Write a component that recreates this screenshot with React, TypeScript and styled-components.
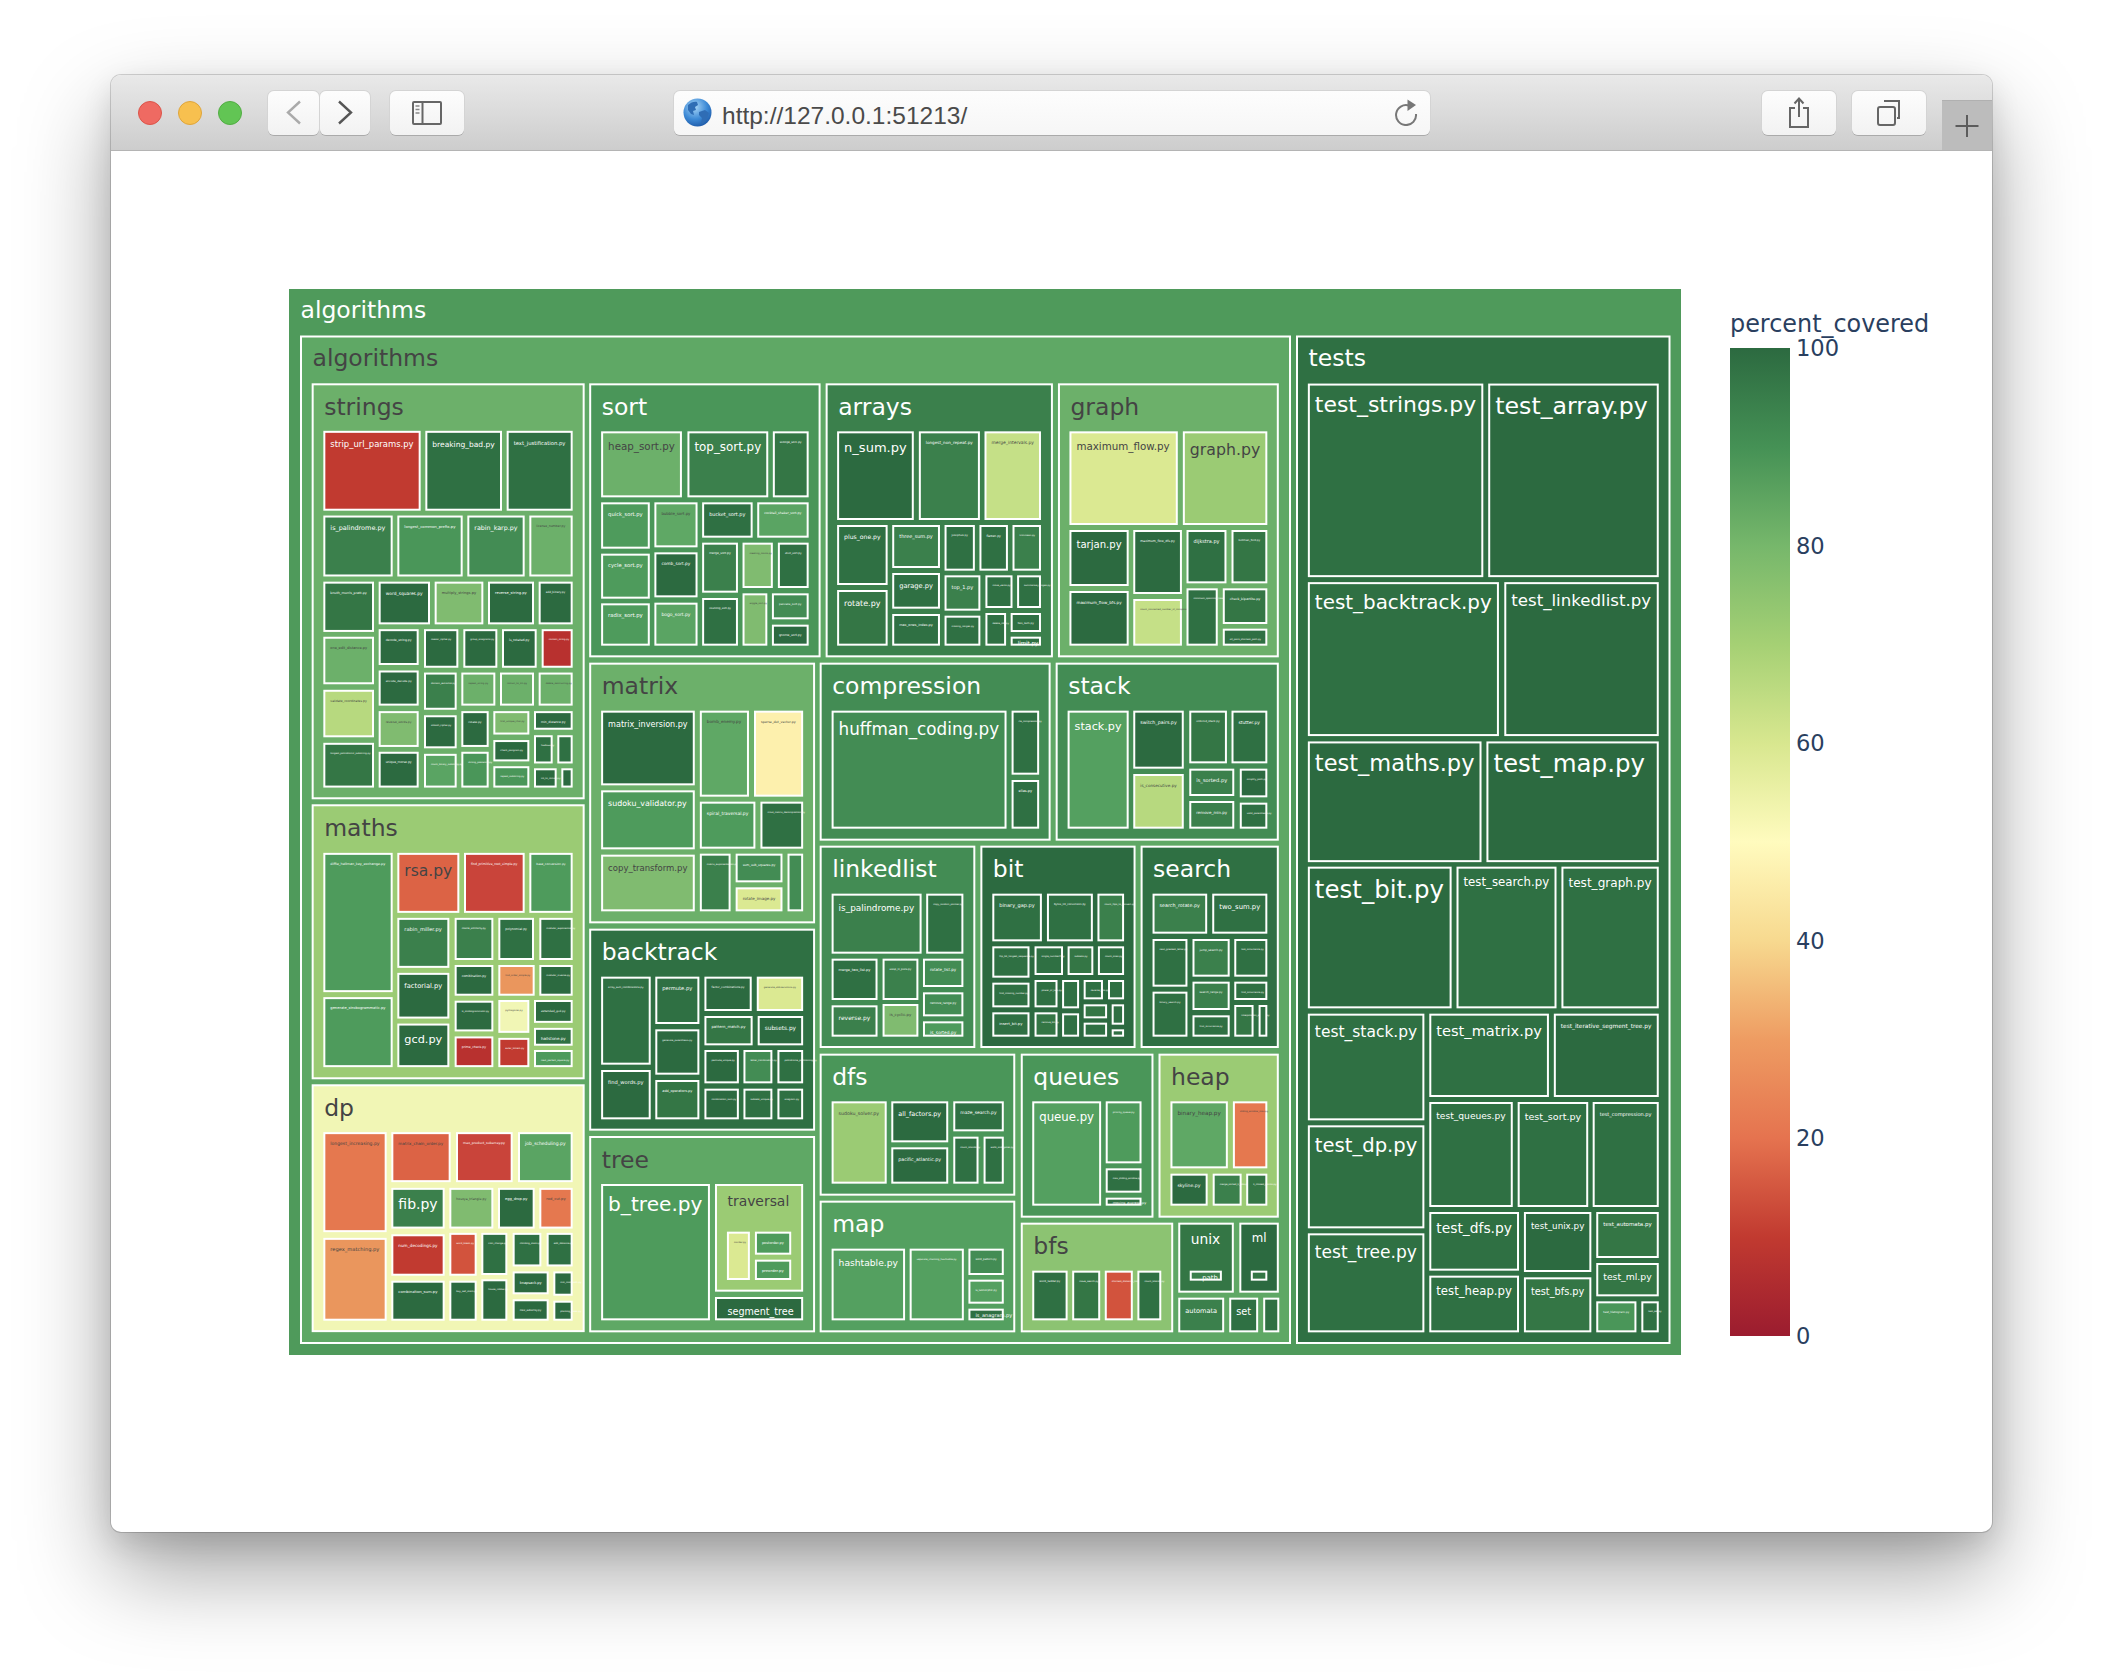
import React from "react";
import styled, { createGlobalStyle } from "styled-components";

const SHADES: Record<string, string> = {
  g0: "#2c6a40",
  g1: "#2f7043",
  g2: "#347645",
  g3: "#3b804c",
  g4: "#438c54",
  g45: "#4a9659",
  g5: "#4e9b5c",
  g55: "#54a060",
  g6: "#5aa463",
  d6: "#5fa865",
  g7: "#6cb06a",
  g8: "#80bb70",
  l1b: "#8cc372",
  l1: "#9bcb74",
  l2: "#b7d97f",
  l3: "#c5e087",
  l4: "#dbe992",
  l5: "#f1f6b5",
  y0: "#fdf0ad",
  o1: "#ea965d",
  o2: "#e5784f",
  o3: "#dc6345",
  r1: "#d2533d",
  r2: "#c9443a",
  r3: "#c13a30",
  r4: "#b8312f",
};
const DARK_INK = ["d6", "g7", "g8", "l1b", "l1", "l2", "l3", "l4", "l5", "y0", "o1", "o2", "o3"];

// x0, y0, x1, y1, shade, label, a fixed label size, the label's baseline below y0
type Tile = [number, number, number, number, string, string?, number?, number?];

const HEAD = 23.5;

// each block is measured in its own grid, place() brings it to page pixels
const place = (ox: number, oy: number, sx: number, sy: number, tiles: Tile[]): Tile[] =>
  tiles.map(([x0, y0, x1, y1, shade, label, head, drop]) => [
    ox + x0 / sx,
    oy + y0 / sy,
    ox + x1 / sx,
    oy + y1 / sy,
    shade,
    label,
    head,
    drop,
  ]);

const ROOTS: Tile[] = [
  [300, 335.5, 1291, 1344, "d6", "algorithms", HEAD, 30.6],
  [1296, 335.5, 1670.5, 1344, "g1", "tests", HEAD, 30.6],
];

const STRINGS = place(280, 280, 3, 2.904, [
  [95, 300, 914, 1508, "g7", "strings", HEAD],
  [130, 438, 422, 670, "r3", "strip_url_params.py"],
  [436, 438, 666, 670, "g1", "breaking_bad.py"],
  [680, 438, 878, 670, "g1", "text_justification.py"],
  [130, 684, 338, 861, "g3", "is_palindrome.py"],
  [352, 684, 548, 861, "g45", "longest_common_prefix.py"],
  [562, 684, 734, 861, "g4", "rabin_karp.py"],
  [748, 684, 878, 861, "g7", "license_number.py"],
  [130, 876, 282, 1022, "g2", "knuth_morris_pratt.py"],
  [296, 876, 450, 1000, "g0", "word_squares.py"],
  [464, 876, 610, 1000, "g8", "multiply_strings.py"],
  [624, 876, 762, 1000, "g0", "reverse_string.py"],
  [776, 876, 878, 1000, "g0", "add_binary.py"],
  [130, 1036, 282, 1174, "g7", "one_edit_distance.py"],
  [130, 1190, 282, 1328, "l2", "validate_coordinates.py"],
  [130, 1344, 282, 1474, "g2", "longest_palindromic_substring.py"],
  [296, 1014, 416, 1118, "g0", "decode_string.py"],
  [432, 1014, 535, 1126, "g0", "caesar_cipher.py"],
  [550, 1014, 652, 1126, "g0", "group_anagrams.py"],
  [666, 1014, 770, 1126, "g0", "is_rotated.py"],
  [785, 1014, 878, 1126, "r4", "contain_string.py"],
  [296, 1134, 416, 1236, "g0", "encode_decode.py"],
  [432, 1140, 530, 1248, "g3", "domain_extractor.py"],
  [544, 1140, 646, 1236, "g7", "repeat_string.py"],
  [660, 1140, 762, 1236, "g7", "roman_to_int.py"],
  [776, 1140, 878, 1236, "g7", "delete_reoccurring.py"],
  [296, 1252, 416, 1356, "g8", "reverse_words.py"],
  [432, 1264, 530, 1360, "g0", "atbash_cipher.py"],
  [544, 1252, 626, 1356, "g0", "rotate.py"],
  [640, 1252, 748, 1320, "g8", "first_unique_char.py"],
  [762, 1252, 878, 1306, "g0", "min_distance.py"],
  [296, 1370, 416, 1474, "g0", "unique_morse.py"],
  [432, 1376, 530, 1474, "g6", "count_binary_substring.py"],
  [544, 1370, 626, 1474, "g45", "strong_password.py"],
  [640, 1336, 748, 1398, "g0", "check_pangram.py"],
  [640, 1412, 748, 1474, "g45", "repeat_substring.py"],
  [762, 1322, 818, 1404, "g1", "fizzbuzz.py"],
  [832, 1322, 878, 1404, "g1"],
  [762, 1418, 830, 1474, "g0", "int_to_roman.py"],
  [844, 1418, 878, 1474, "g0"],
]);

const MATHS_DP = place(280, 800, 3, 2.8, [
  [95, 12, 914, 782, "l1", "maths", HEAD],
  [130, 148, 338, 538, "g5", "diffie_hellman_key_exchange.py"],
  [130, 552, 338, 748, "g5", "generate_strobogrammatic.py"],
  [352, 148, 538, 316, "o3", "rsa.py"],
  [552, 148, 734, 316, "r2", "find_primitive_root_simple.py"],
  [748, 148, 878, 316, "g5", "base_conversion.py"],
  [352, 330, 508, 470, "g3", "rabin_miller.py"],
  [524, 330, 640, 448, "g3", "cosine_similarity.py"],
  [655, 330, 762, 448, "g1", "polynomial.py"],
  [778, 330, 878, 448, "g1", "modular_exponential.py"],
  [352, 484, 508, 612, "g0", "factorial.py"],
  [524, 462, 640, 548, "g0", "combination.py"],
  [655, 462, 764, 548, "o1", "find_order_simple.py"],
  [778, 462, 878, 548, "g0", "modular_inverse.py"],
  [352, 626, 508, 748, "g0", "gcd.py"],
  [524, 562, 640, 648, "g0", "is_strobogrammatic.py"],
  [655, 560, 748, 652, "l5", "pythagoras.py"],
  [762, 560, 878, 624, "g0", "extended_gcd.py"],
  [524, 662, 640, 748, "r4", "prime_check.py"],
  [655, 666, 748, 748, "r3", "euler_totient.py"],
  [762, 638, 878, 688, "g1", "hailstone.py"],
  [762, 700, 878, 748, "g5", "next_perfect_square.py"],
  [95, 796, 914, 1490, "l5", "dp", HEAD],
  [130, 930, 320, 1210, "o2", "longest_increasing.py"],
  [130, 1226, 320, 1458, "o1", "regex_matching.py"],
  [334, 930, 512, 1070, "o3", "matrix_chain_order.py"],
  [528, 930, 698, 1070, "r2", "max_product_subarray.py"],
  [714, 930, 878, 1070, "g6", "job_scheduling.py"],
  [334, 1086, 494, 1200, "g3", "fib.py"],
  [508, 1086, 640, 1200, "g8", "hosoya_triangle.py"],
  [654, 1086, 764, 1200, "g0", "egg_drop.py"],
  [778, 1086, 878, 1200, "o2", "rod_cut.py"],
  [334, 1216, 494, 1332, "r3", "num_decodings.py"],
  [508, 1212, 590, 1332, "r1", "word_break.py"],
  [604, 1212, 682, 1330, "g1", "coin_change.py"],
  [698, 1212, 784, 1306, "g1", "climbing_stairs.py"],
  [800, 1212, 878, 1306, "g1", "edit_distance.py"],
  [334, 1346, 494, 1458, "g0", "combination_sum.py"],
  [508, 1346, 590, 1458, "g0", "buy_sell_stock.py"],
  [604, 1342, 682, 1458, "g0", "house_robber.py"],
  [698, 1320, 806, 1384, "g0", "knapsack.py"],
  [698, 1398, 806, 1458, "g0", "max_subarray.py"],
  [820, 1320, 878, 1388, "g0", "min_cost_path.py"],
  [820, 1402, 878, 1458, "g0", "planting_trees.py"],
]);

const TOP_ROW = place(580, 370, 2.178, 3, [
  [20, 40, 524, 862, "g45", "sort", HEAD],
  [46, 184, 222, 382, "g7", "heap_sort.py"],
  [234, 184, 410, 382, "g3", "top_sort.py"],
  [420, 184, 498, 382, "g2", "stooge_sort.py"],
  [46, 397, 152, 536, "g5", "quick_sort.py"],
  [162, 397, 256, 532, "d6", "bubble_sort.py"],
  [266, 397, 376, 503, "g1", "bucket_sort.py"],
  [386, 397, 498, 503, "g6", "cocktail_shaker_sort.py"],
  [46, 551, 152, 686, "g5", "cycle_sort.py"],
  [162, 547, 256, 682, "g0", "comb_sort.py"],
  [266, 518, 344, 668, "g3", "merge_sort.py"],
  [354, 518, 420, 654, "g8", "meeting_rooms.py"],
  [431, 518, 498, 654, "g1", "shell_sort.py"],
  [46, 700, 152, 827, "g5", "radix_sort.py"],
  [162, 698, 256, 827, "g6", "bogo_sort.py"],
  [266, 684, 344, 827, "g1", "counting_sort.py"],
  [354, 670, 408, 827, "g8", "wiggle_sort.py"],
  [418, 670, 498, 748, "g4", "pancake_sort.py"],
  [418, 764, 498, 827, "g0", "gnome_sort.py"],
  [535, 40, 1030, 862, "g3", "arrays", HEAD],
  [560, 184, 727, 450, "g0", "n_sum.py"],
  [738, 184, 871, 450, "g3", "longest_non_repeat.py"],
  [881, 184, 1004, 450, "l3", "merge_intervals.py"],
  [560, 465, 670, 645, "g1", "plus_one.py"],
  [680, 465, 784, 594, "g3", "three_sum.py"],
  [794, 465, 860, 602, "g1", "josephus.py"],
  [870, 465, 932, 602, "g1", "flatten.py"],
  [942, 465, 1004, 602, "g3", "trimmean.py"],
  [560, 660, 670, 827, "g2", "rotate.py"],
  [680, 609, 784, 716, "g1", "garage.py"],
  [794, 616, 872, 722, "g3", "top_1.py"],
  [883, 616, 942, 714, "g1", "move_zeros.py"],
  [952, 616, 1004, 714, "g1", "summarize_ranges.py"],
  [680, 732, 784, 827, "g1", "max_ones_index.py"],
  [794, 737, 872, 827, "g1", "missing_ranges.py"],
  [883, 729, 928, 827, "g1", "delete_nth.py"],
  [938, 729, 1004, 786, "g1", "two_sum.py"],
  [938, 800, 1004, 827, "g1", "limit.py", 5.5, 8.5],
  [1041, 40, 1522, 862, "g7", "graph", HEAD],
  [1066, 184, 1302, 465, "l4", "maximum_flow.py"],
  [1313, 184, 1497, 465, "l1", "graph.py"],
  [1066, 480, 1195, 648, "g0", "tarjan.py"],
  [1205, 480, 1311, 672, "g0", "maximum_flow_dfs.py"],
  [1321, 480, 1408, 640, "g1", "dijkstra.py"],
  [1419, 480, 1497, 640, "g2", "bellman_ford.py"],
  [1066, 663, 1195, 827, "g0", "maximum_flow_bfs.py"],
  [1205, 687, 1311, 827, "l3", "count_connected_number_of_component.py"],
  [1321, 655, 1389, 827, "g1", "minimum_spanning_tree.py"],
  [1400, 655, 1497, 762, "g2", "check_bipartite.py"],
  [1400, 776, 1497, 827, "g1", "all_pairs_shortest_path.py"],
]);

const MIDDLE_ROW = place(580, 650, 2.178, 3, [
  [20, 38, 512, 820, "g7", "matrix", HEAD],
  [46, 182, 250, 406, "g0", "matrix_inversion.py"],
  [261, 182, 368, 440, "d6", "bomb_enemy.py"],
  [379, 182, 486, 440, "y0", "sparse_dot_vector.py"],
  [46, 421, 250, 598, "g5", "sudoku_validator.py"],
  [261, 455, 382, 596, "g5", "spiral_traversal.py"],
  [393, 455, 486, 596, "g1", "crout_matrix_decomposition.py"],
  [46, 614, 250, 784, "g8", "copy_transform.py"],
  [261, 611, 328, 784, "g3", "matrix_exponentiation.py"],
  [339, 611, 441, 697, "g4", "sum_sub_squares.py"],
  [339, 712, 441, 784, "l4", "rotate_image.py"],
  [452, 611, 486, 784, "g4"],
  [20, 836, 512, 1442, "g1", "backtrack", HEAD],
  [46, 980, 154, 1244, "g1", "array_sum_combinations.py"],
  [164, 980, 260, 1122, "g1", "permute.py"],
  [271, 980, 374, 1083, "g0", "factor_combinations.py"],
  [385, 980, 486, 1083, "l4", "generate_abbreviations.py"],
  [271, 1098, 376, 1186, "g2", "pattern_match.py"],
  [387, 1098, 486, 1186, "g0", "subsets.py"],
  [164, 1138, 260, 1274, "g0", "generate_parenthesis.py"],
  [46, 1260, 154, 1408, "g0", "find_words.py"],
  [164, 1290, 260, 1408, "g2", "add_operators.py"],
  [271, 1200, 346, 1300, "g0", "permute_unique.py"],
  [356, 1200, 419, 1300, "g4", "letter_combination.py"],
  [430, 1200, 486, 1300, "g1", "palindrome_partitioning.py"],
  [271, 1316, 346, 1408, "g0", "combination_sum.py"],
  [356, 1316, 419, 1408, "g1", "subsets_unique.py"],
  [430, 1316, 486, 1408, "g1", "anagram.py"],
  [522, 38, 1025, 572, "g4", "compression", HEAD],
  [548, 182, 929, 536, "g4", "huffman_coding.py"],
  [940, 182, 1000, 374, "g1", "rle_compression.py"],
  [940, 390, 1000, 536, "g1", "elias.py"],
  [1036, 38, 1522, 572, "g4", "stack", HEAD],
  [1062, 182, 1195, 536, "g55", "stack.py"],
  [1205, 182, 1315, 356, "g0", "switch_pairs.py"],
  [1327, 182, 1409, 340, "g2", "ordered_stack.py"],
  [1419, 182, 1497, 340, "g1", "stutter.py"],
  [1205, 372, 1315, 536, "l2", "is_consecutive.py"],
  [1327, 356, 1425, 438, "g3", "is_sorted.py"],
  [1437, 356, 1497, 442, "g0", "simplify_path.py"],
  [1327, 453, 1425, 536, "g3", "remove_min.py"],
  [1437, 458, 1497, 536, "g1", "valid_parenthesis.py"],
  [522, 587, 861, 1194, "g4", "linkedlist", HEAD],
  [548, 731, 744, 911, "g3", "is_palindrome.py"],
  [754, 731, 835, 911, "g1", "copy_random_pointer.py"],
  [548, 926, 648, 1050, "g1", "merge_two_list.py"],
  [659, 926, 737, 1050, "g3", "swap_in_pairs.py"],
  [747, 926, 835, 1011, "g4", "rotate_list.py"],
  [548, 1066, 648, 1160, "g3", "reverse.py"],
  [659, 1062, 737, 1160, "g8", "is_cyclic.py"],
  [747, 1027, 835, 1099, "g4", "remove_range.py"],
  [747, 1114, 835, 1160, "g5", "is_sorted.py"],
  [872, 587, 1210, 1194, "g0", "bit", HEAD],
  [898, 731, 1006, 874, "g1", "binary_gap.py"],
  [1017, 731, 1117, 874, "g1", "bytes_int_conversion.py"],
  [1127, 731, 1185, 874, "g3", "count_flips_to_convert.py"],
  [898, 889, 979, 983, "g1", "flip_bit_longest_sequence.py"],
  [990, 889, 1052, 975, "g1", "single_number2.py"],
  [1062, 889, 1118, 975, "g2", "subsets.py"],
  [1128, 889, 1185, 975, "g1", "count_ones.py"],
  [898, 998, 979, 1072, "g1", "find_missing_number.py"],
  [990, 990, 1040, 1072, "g1", "power_of_two.py"],
  [1050, 990, 1087, 1075, "g1"],
  [1097, 990, 1139, 1048, "g1", "reverse_bits.py"],
  [1150, 990, 1185, 1048, "g1"],
  [1097, 1063, 1148, 1105, "g2"],
  [1158, 1063, 1185, 1124, "g1"],
  [898, 1087, 979, 1160, "g1", "insert_bit.py"],
  [990, 1087, 1040, 1160, "g2", "remove_bit.py"],
  [1050, 1090, 1087, 1160, "g1"],
  [1097, 1118, 1148, 1160, "g1"],
  [1158, 1138, 1185, 1160, "g1"],
  [1221, 587, 1522, 1194, "g1", "search", HEAD],
  [1247, 731, 1366, 851, "g3", "search_rotate.py"],
  [1377, 731, 1497, 851, "g1", "two_sum.py"],
  [1247, 867, 1323, 1010, "g1", "next_greatest_letter.py"],
  [1334, 867, 1415, 980, "g3", "jump_search.py"],
  [1425, 867, 1497, 980, "g1", "last_occurrence.py"],
  [1247, 1025, 1323, 1160, "g1", "binary_search.py"],
  [1334, 995, 1415, 1080, "g3", "search_range.py"],
  [1425, 995, 1497, 1050, "g1", "find_occurrence.py"],
  [1334, 1096, 1415, 1160, "g1", "first_occurrence.py"],
  [1425, 1065, 1467, 1160, "g2", "interpolation_search.py"],
  [1478, 1065, 1497, 1160, "g1"],
]);

const BOTTOM_ROW = place(580, 1030, 2.178, 3, [
  [20, 318, 512, 907, "d6", "tree", HEAD],
  [46, 462, 283, 871, "g5", "b_tree.py"],
  [294, 462, 486, 785, "l1", "traversal", 13.9],
  [320, 605, 370, 750, "l4", "inorder.py"],
  [381, 605, 460, 674, "g5", "postorder.py"],
  [381, 689, 460, 750, "g5", "preorder.py"],
  [294, 801, 486, 871, "g0", "segment_tree", 9.6],
  [522, 71, 948, 497, "g45", "dfs", HEAD],
  [548, 214, 668, 461, "l1", "sudoku_solver.py"],
  [678, 214, 802, 337, "g0", "all_factors.py"],
  [813, 214, 923, 304, "g1", "maze_search.py"],
  [678, 352, 802, 461, "g0", "pacific_atlantic.py"],
  [813, 320, 868, 461, "g1", "count_islands.py"],
  [879, 320, 923, 461, "g1", "walls_and_gates.py"],
  [522, 512, 948, 907, "g55", "map", HEAD],
  [548, 656, 708, 871, "g55", "hashtable.py"],
  [718, 656, 836, 871, "g55", "separate_chaining_hashtable.py"],
  [846, 656, 923, 735, "g4", "word_pattern.py"],
  [846, 749, 923, 821, "g55", "is_isomorphic.py"],
  [846, 836, 923, 871, "g1", "is_anagram.py", 5, 8.5],
  [960, 71, 1249, 563, "g45", "queues", HEAD],
  [985, 214, 1135, 527, "g55", "queue.py"],
  [1145, 214, 1223, 400, "g5", "priority_queue.py"],
  [1145, 415, 1223, 488, "g1", "max_sliding_window.py"],
  [1145, 503, 1223, 527, "g1", "moving_average.py", 3.4, 6],
  [1260, 71, 1522, 563, "l1", "heap", HEAD],
  [1286, 214, 1411, 415, "d6", "binary_heap.py"],
  [1422, 214, 1497, 415, "o2", "sliding_window_max.py"],
  [1286, 431, 1367, 527, "g0", "skyline.py"],
  [1378, 431, 1441, 527, "g3", "merge_sorted_k_lists.py"],
  [1451, 431, 1497, 527, "g2", "k_closest_points.py"],
  [960, 578, 1292, 907, "l1b", "bfs", HEAD],
  [985, 722, 1062, 871, "g1", "word_ladder.py"],
  [1072, 722, 1133, 871, "g2", "maze_search.py"],
  [1143, 722, 1204, 871, "r1", "shortest_distance_from_all_buildings.py"],
  [1214, 722, 1266, 871, "g1", "count_islands.py"],
  [1303, 578, 1424, 788, "g2", "unix", 13.8],
  [1328, 722, 1398, 752, "g3", "path", 6.9, 9.3],
  [1436, 578, 1522, 788, "g0", "ml", 11.8],
  [1461, 722, 1497, 752, "g2"],
  [1303, 803, 1403, 907, "g3", "automata"],
  [1414, 803, 1477, 907, "g1", "set"],
  [1488, 803, 1523, 907, "g1"],
]);

const TESTS_TOP = place(1290, 320, 2.24, 2.8, [
  [40, 178, 433, 720, "g1", "test_strings.py"],
  [444, 178, 826, 720, "g0", "test_array.py"],
  [40, 734, 468, 1165, "g1", "test_backtrack.py"],
  [480, 734, 826, 1165, "g0", "test_linkedlist.py"],
  [40, 1180, 429, 1518, "g0", "test_maths.py"],
  [440, 1180, 826, 1518, "g0", "test_map.py"],
]);

const TESTS_BOTTOM = place(1290, 860, 2.24, 3, [
  [40, 20, 362, 445, "g0", "test_bit.py"],
  [373, 20, 597, 445, "g1", "test_search.py"],
  [608, 20, 826, 445, "g1", "test_graph.py"],
  [40, 461, 301, 781, "g1", "test_stack.py"],
  [312, 461, 580, 711, "g1", "test_matrix.py"],
  [591, 461, 826, 711, "g0", "test_iterative_segment_tree.py"],
  [40, 796, 301, 1105, "g1", "test_dp.py"],
  [312, 726, 499, 1041, "g1", "test_queues.py"],
  [510, 726, 668, 1041, "g1", "test_sort.py"],
  [678, 726, 826, 1041, "g1", "test_compression.py"],
  [40, 1120, 301, 1417, "g1", "test_tree.py"],
  [312, 1056, 513, 1232, "g1", "test_dfs.py"],
  [524, 1056, 675, 1236, "g0", "test_unix.py"],
  [686, 1056, 826, 1194, "g2", "test_automata.py"],
  [312, 1247, 513, 1417, "g1", "test_heap.py"],
  [524, 1252, 675, 1417, "g2", "test_bfs.py"],
  [686, 1209, 826, 1309, "g2", "test_ml.py"],
  [686, 1324, 776, 1417, "g45", "test_histogram.py"],
  [787, 1324, 826, 1417, "g1", "test_set.py"],
]);

const TILES = [
  ...ROOTS,
  ...STRINGS,
  ...MATHS_DP,
  ...TOP_ROW,
  ...MIDDLE_ROW,
  ...BOTTOM_ROW,
  ...TESTS_TOP,
  ...TESTS_BOTTOM,
];

const TICKS = [100, 80, 60, 40, 20, 0];

const GlobalStyle = createGlobalStyle`
  html, body {
    margin: 0;
    padding: 0;
    background: #fff;
  }
  body {
    width: 2104px;
    height: 1680px;
    overflow: hidden;
  }
`;

const Window = styled.div`
  width: 1881px;
  height: 1457px;
  margin: 75px 0 0 111px;
  border-radius: 10px;
  background: #fff;
  box-shadow: 0 0 0 1px rgba(0, 0, 0, 0.16), 0 12px 30px rgba(0, 0, 0, 0.12),
    0 40px 90px rgba(0, 0, 0, 0.36);
`;

const Toolbar = styled.div`
  display: flex;
  align-items: center;
  box-sizing: border-box;
  height: 76px;
  padding-left: 27px;
  border-radius: 10px 10px 0 0;
  background: linear-gradient(#e9e9e9, #cdcdcd);
  border-bottom: 1px solid #b4b4b4;
`;

const Light = styled.span<{ $color: string; $edge: string }>`
  box-sizing: border-box;
  width: 24px;
  height: 24px;
  margin-right: 16px;
  border-radius: 50%;
  background: ${(p) => p.$color};
  border: 1px solid ${(p) => p.$edge};
`;

const ToolButton = styled.button<{ $width: number; $gap: number }>`
  display: flex;
  align-items: center;
  justify-content: center;
  box-sizing: border-box;
  flex: none;
  width: ${(p) => p.$width}px;
  height: 44px;
  margin: 0 0 0 ${(p) => p.$gap}px;
  padding: 0;
  border: none;
  border-radius: 6px;
  background: linear-gradient(#fdfdfd, #f2f2f2);
  box-shadow: 0 1px 0 #aaa, 0 0 0 1px #d4d4d4;
`;

const UrlBar = styled.div`
  display: flex;
  align-items: center;
  box-sizing: border-box;
  flex: none;
  width: 756px;
  height: 44px;
  margin-left: 210px;
  padding: 0 12px 0 9px;
  border-radius: 6px;
  background: linear-gradient(#fdfdfd, #f6f6f6);
  box-shadow: 0 1px 0 #aaa, 0 0 0 1px #d4d4d4;
`;

const UrlText = styled.span`
  flex: 1;
  margin: 6px 0 0 10px;
  font-family: "Liberation Sans", Arial, sans-serif;
  font-size: 24.5px;
  color: #4a4a4a;
`;

const NewTab = styled.div`
  display: flex;
  align-items: center;
  justify-content: center;
  flex: none;
  align-self: flex-end;
  width: 50px;
  height: 49px;
  margin-left: 16px;
  background: #bcbcbc;
  border-top: 1px solid #b0b0b0;
`;

const Page = styled.div`
  display: flex;
  align-items: flex-start;
  padding: 138px 0 0 178px;
`;

const Chart = styled.svg`
  display: block;
  flex: none;
  width: 1392px;
  height: 1066px;
`;

const RootRect = styled.rect`
  fill: #4f9a5b;
`;

const TileRect = styled.rect`
  stroke: #fff;
  stroke-width: 2px;
`;

const TileLabel = styled.text`
  font-family: "DejaVu Sans", Verdana, sans-serif;
`;

const Legend = styled.div`
  flex: none;
  margin: 21px 0 0 49px;
  font-family: "DejaVu Sans", Verdana, sans-serif;
  color: #2a3f5f;
`;

const LegendTitle = styled.div`
  height: 38px;
  font-size: 23.9px;
  line-height: 28px;
  white-space: nowrap;
`;

const ScaleRow = styled.div`
  display: flex;
`;

const ColorBar = styled.div`
  width: 60px;
  height: 988px;
  background: linear-gradient(
    to top,
    #9b1c2f 0%,
    #c13a30 10%,
    #e5734f 20%,
    #ee9c62 30%,
    #f7d98f 40%,
    #fffbbe 50%,
    #d8e78f 60%,
    #a5d074 70%,
    #76b76b 80%,
    #459155 90%,
    #2c6a40 100%
  );
`;

const Ticks = styled.div`
  display: flex;
  flex-direction: column;
  justify-content: space-between;
  height: 1016px;
  margin: -14px 0 0 6px;
  font-size: 22.6px;
  line-height: 28px;
`;

// advance widths of DejaVu Sans, in em
const GLYPHS: Record<string, number> = {
  a: 0.613, b: 0.635, c: 0.55, d: 0.635, e: 0.615, f: 0.352, g: 0.635, h: 0.634, i: 0.278,
  j: 0.278, k: 0.579, l: 0.278, m: 0.974, n: 0.634, o: 0.612, p: 0.635, q: 0.635, r: 0.411,
  s: 0.521, t: 0.392, u: 0.634, v: 0.592, w: 0.818, x: 0.592, y: 0.592, z: 0.525, _: 0.5,
  ".": 0.318,
};

const emWidth = (label: string) =>
  [...label].reduce((sum, ch) => sum + (GLYPHS[ch] ?? 0.636), 0);

const inkFor = (shade: string) => (DARK_INK.includes(shade) ? "#444" : "#fff");

// file names shrink until they fit the tile
const fitSize = (width: number, label: string) =>
  Math.min(24.5, Math.max(2.4, (width - 14) / emWidth(label)));

function TreeTile({ tile }: { tile: Tile }) {
  const [x0, y0, x1, y1, shade, label, head, drop] = tile;
  const size = head ?? (label ? fitSize(x1 - x0, label) : 0);
  const baseline = drop ?? (head ? 8 + size : 9 + 0.9 * size);
  return (
    <g>
      <TileRect
        x={x0 + 1}
        y={y0 + 1}
        width={x1 - x0 - 2}
        height={y1 - y0 - 2}
        fill={SHADES[shade]}
      />
      {label && (
        <TileLabel
          x={x0 + (head && size > 6.5 ? 12.5 : 7)}
          y={y0 + baseline}
          fontSize={size}
          fill={inkFor(shade)}
        >
          {label}
        </TileLabel>
      )}
    </g>
  );
}

function Globe() {
  return (
    <svg width="29" height="29" viewBox="0 0 29 29">
      <defs>
        <radialGradient id="sea" cx="0.4" cy="0.3" r="0.8">
          <stop offset="0" stopColor="#a9d6f7" />
          <stop offset="0.55" stopColor="#3d8ad6" />
          <stop offset="1" stopColor="#17509f" />
        </radialGradient>
      </defs>
      <circle cx="14.5" cy="14.5" r="14" fill="url(#sea)" />
      <path
        d="M5 7c3-3 7-4 9-3l1 3-3 2 1 3-3 1 1 4-3-1-3-4zM16 14l6-2 4 3-2 6-4 5-2-1 1-5-3-3z"
        fill="#2f6db5"
      />
    </svg>
  );
}

export default function App() {
  return (
    <>
      <GlobalStyle />
      <Window>
        <Toolbar>
          <Light $color="#ef6a62" $edge="#dc5449" />
          <Light $color="#f7c04f" $edge="#dfa53b" />
          <Light $color="#62c554" $edge="#52ad43" />
          <ToolButton $width={51} $gap={10}>
            <svg width="17" height="25" viewBox="0 0 17 25">
              <path d="M15 1.5 3 12.5l12 11" fill="none" stroke="#aaa" strokeWidth="2.4" />
            </svg>
          </ToolButton>
          <ToolButton $width={50} $gap={1}>
            <svg width="17" height="25" viewBox="0 0 17 25">
              <path d="M2 1.5l12 11-12 11" fill="none" stroke="#555" strokeWidth="2.4" />
            </svg>
          </ToolButton>
          <ToolButton $width={74} $gap={20}>
            <svg width="30" height="24" viewBox="0 0 30 24">
              <rect x="1" y="1" width="28" height="22" fill="none" stroke="#666" strokeWidth="2" rx="1" />
              <path d="M10.5 1v22" stroke="#666" strokeWidth="2" />
              <path d="M3.5 5h4M3.5 8.5h4M3.5 12h4" stroke="#888" strokeWidth="1.6" />
            </svg>
          </ToolButton>
          <UrlBar>
            <Globe />
            <UrlText>http://127.0.0.1:51213/</UrlText>
            <svg width="23" height="27" viewBox="0 0 23 27">
              <path d="M14 6.5A10 10 0 1 0 21 15" fill="none" stroke="#777" strokeWidth="2" />
              <path d="M12.5 0.5 21 6l-8.5 6z" fill="#777" />
            </svg>
          </UrlBar>
          <ToolButton $width={74} $gap={332}>
            <svg width="22" height="31" viewBox="0 0 22 31">
              <path d="M7 11H2v19h18V11h-5" fill="none" stroke="#666" strokeWidth="2" />
              <path d="M11 2v18M6.5 6.5 11 1.5l4.5 5" fill="none" stroke="#666" strokeWidth="2" />
            </svg>
          </ToolButton>
          <ToolButton $width={74} $gap={16}>
            <svg width="24" height="26" viewBox="0 0 24 26">
              <rect x="1" y="7" width="17" height="18" rx="2" fill="none" stroke="#666" strokeWidth="2" />
              <path d="M7 1h15v17h-2" fill="none" stroke="#666" strokeWidth="2" />
            </svg>
          </ToolButton>
          <NewTab>
            <svg width="24" height="24" viewBox="0 0 24 24">
              <path d="M12 1v22M0.5 12h23" stroke="#5c5c5c" strokeWidth="2" />
            </svg>
          </NewTab>
        </Toolbar>
        <Page>
          <Chart viewBox="289 289 1392 1066">
            <RootRect x="289" y="289" width="1392" height="1066" />
            <TileLabel x="300.5" y="318" fontSize={HEAD} fill="#fff">
              algorithms
            </TileLabel>
            {TILES.map((tile, i) => (
              <TreeTile key={i} tile={tile} />
            ))}
          </Chart>
          <Legend>
            <LegendTitle>percent_covered</LegendTitle>
            <ScaleRow>
              <ColorBar />
              <Ticks>
                {TICKS.map((tick) => (
                  <span key={tick}>{tick}</span>
                ))}
              </Ticks>
            </ScaleRow>
          </Legend>
        </Page>
      </Window>
    </>
  );
}
